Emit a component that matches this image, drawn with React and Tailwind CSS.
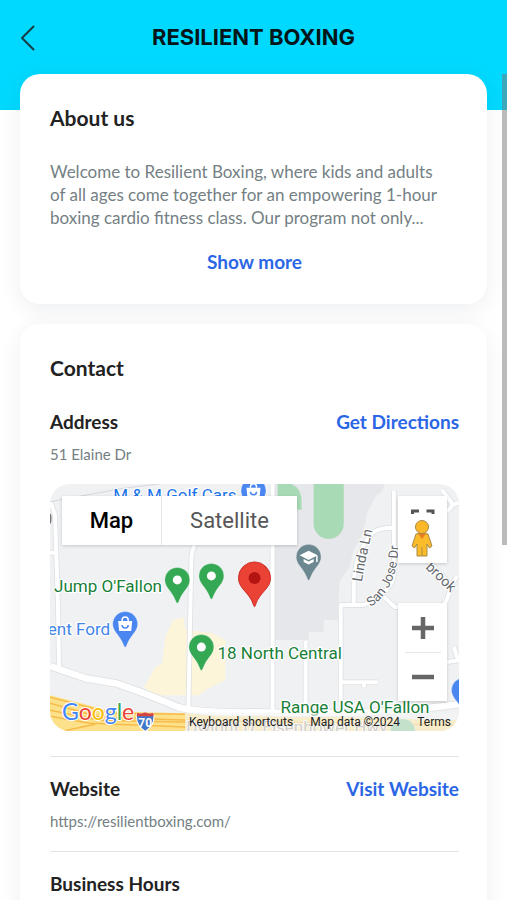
import { useState } from "react";

const ROADS = [
    "M0 17 L5 31 L8 124 L9 185",
    "M0 69 H6",
    "M147 55 Q141 66 141 76 L138 225",
    "M222 0 V228",
    "M255 157 V229",
    "M290 218 V121 L303 121 V96 Q306 66 321 50 Q326 44 343 44",
    "M343 7 V91 Q341 108 313 121 H303",
    "M333 113 L344 123 H386 Q396 121 397 112 L401 102 L377 77",
    "M400 102 L406 92",
    "M391 6 L402 21 L408 19 M402 21 L396 28",
    "M396 178 L408 176 M403 163 L407 176",
    "M290 198 H327 M313 198 V203",
]

const MAIN_ROAD = "M0 182 L35 194 L65 199 Q90 207 128 223 Q150 229 205 228 Q320 232 408 220"

function Pin({ x, y, color, children }){
    return (
        <g transform={`translate(${x} ${y})`}>
            <path d="M0 -12.5 A12.5 12.5 0 0 1 12.5 0 C12.5 7 6 11 3 18 L1 22.5 Q0 24 -1 22.5 L-3 18 C-6 11 -12.5 7 -12.5 0 A12.5 12.5 0 0 1 0 -12.5Z" fill={color} stroke="#fff" strokeOpacity="0.6" strokeWidth="0.6" />
            {children}
        </g>
    )
}

function BagGlyph(){
    return (
        <g>
            <path d="M-7 -3 H7 L6 7 H-6Z" fill="#fff" />
            <path d="M-3 -3 V-4 A3 3 0 0 1 3 -4 V-3" fill="none" stroke="#fff" strokeWidth="1.5" />
            <path d="M-3 1 A3 3 0 0 0 3 1" fill="none" stroke="#4a86f0" strokeWidth="1.5" />
        </g>
    )
}

function MapCanvas(){
    return (
        <svg viewBox="0 0 408 247" preserveAspectRatio="xMidYMid slice" className="block h-full w-full" fontFamily="Roboto, sans-serif">
            <rect width="408" height="247" fill="#eff1f3" />
            <path d="M223 0 H334 Q333 8 325 12 L316 30 Q314 52 303 66 L298 85 L289 97 L287 136 H273 V148 H258 V156 H223Z" fill="#e6e7eb" />
            <path d="M227 0 H240 Q251 4 251 18 V26 H227Z" fill="#a8dab5" />
            <path d="M263 0 H293 V40 A15 15 0 0 1 263 40Z" fill="#a8dab5" />
            <path d="M123 136 L133 133 L135 146 L162 149 L175 156 V196 L158 204 L148 211 H102 L94 203 L105 183 L112 179 L115 153Z" fill="#fdf5da" />

            {/* highway */}
            <path d="M0 211 L62 227 L135 229 L408 236 V247 H0Z" fill="#fde08a" />
            <g fill="none" stroke="#f6bc4b" strokeWidth="1.5">
                <path d="M0 213 L62 229 L135 230" />
                <path d="M0 219 L50 233 L140 236 L408 241" />
                <path d="M0 226 L50 236 L140 238" />
                <path d="M0 232 L40 239 L140 243" />
                <path d="M12 247 L45 240" />
            </g>

            <g fill="none" stroke="#dcdfe2" strokeWidth="5.5" strokeLinejoin="round">
                {ROADS.map((d) => <path key={d} d={d} />)}
                <path d={MAIN_ROAD} strokeWidth="8" />
            </g>
            <g fill="none" stroke="#fff" strokeWidth="4" strokeLinejoin="round">
                {ROADS.map((d) => <path key={d} d={d} />)}
                <path d={MAIN_ROAD} strokeWidth="6.5" />
            </g>
            <path d="M0 18 L70 5 L110 0" fill="none" stroke="#d5d7da" strokeWidth="1" />
            <ellipse cx="0" cy="35" rx="1.5" ry="5" fill="#777" />

            <g fill="#64686d" fontSize="14" stroke="#fff" strokeWidth="2" paintOrder="stroke">
                <path id="linda" d="M311 98 Q315 74 325 32" fill="none" stroke="none" />
                <path id="sanjose" d="M320 123 Q343 108 347 72 L350 35" fill="none" stroke="none" />
                <text><textPath href="#linda">Linda Ln</textPath></text>
                <text fontSize="13"><textPath href="#sanjose">San Jose Dr</textPath></text>
                <text transform="translate(374 84) rotate(44)">brook</text>
                <text x="136" y="249" fontSize="17" fill="#9c9484">Dwight D. Eisenhower Hwy</text>
            </g>

            <g fontSize="17" stroke="#fff" strokeWidth="2.5" strokeLinejoin="round" paintOrder="stroke">
                <text x="63" y="17" fill="#1a73e8">M &amp; M Golf Cars</text>
                <text x="60" y="151" textAnchor="end" fill="#4285e8">ent Ford</text>
                <text x="4" y="108" fill="#188038">Jump O'Fallon</text>
                <text x="167" y="175" fill="#188038">18 North Central</text>
                <text x="230" y="229" fill="#188038">Range USA O'Fallon</text>
            </g>

            <Pin x={203} y={7} color="#4a86f0"><BagGlyph /></Pin>
            <Pin x={75} y={140} color="#4a86f0"><BagGlyph /></Pin>
            <Pin x={413} y={206} color="#4a86f0" />
            <Pin x={127} y={96} color="#34a853"><circle r="4.5" fill="#fff" /></Pin>
            <Pin x={161} y={92} color="#34a853"><circle r="4.5" fill="#fff" /></Pin>
            <Pin x={151} y={163} color="#34a853"><circle r="4.5" fill="#fff" /></Pin>
            <Pin x={352} y={247} color="#7cc48d" />
            <Pin x={258} y={73} color="#6b8790">
                <path d="M0 -6 L9 -1.5 L0 3 L-9 -1.5Z" fill="#fff" />
                <path d="M-5 2 L0 4.5 L5 2 V5 L0 7.5 L-5 5Z M7.5 -1 H9 V5 H7.5Z" fill="#fff" />
            </Pin>
            <path d="M204 78 A16 16 0 0 1 220 94 C220 105 209 108 205 121 Q204 124.500 203 121 C199 108 188 105 188 94 A16 16 0 0 1 204 78Z" fill="#ea4335" stroke="#c5221f" strokeWidth="0.8" />
            <circle cx="204" cy="94" r="6" fill="#b31412" />

            {/* interstate shield */}
            <path d="M87 229 Q94 231 95 228 Q96 231 103 229 Q106 240 95 247 Q84 240 87 229Z" fill="#3f78c9" stroke="#fff" strokeWidth="1" />
            <path d="M86.500 232 L87 228.500 Q92 230 95 228 Q98 230 103 228.500 L103.500 232Z" fill="#d6453d" />
            <text x="95" y="243" textAnchor="middle" fontSize="12" fontWeight="700" fill="#fff">70</text>
        </svg>
    )
}

function Pegman(){
    return (
        <svg viewBox="0 0 49 67" className="h-[67px] w-[49px]">
            <path d="M14.500 18 V15 H21 M28.500 15 H35 V18" fill="none" stroke="#555" strokeWidth="3" />
            <path d="M18 38 Q24 36 30 38 L34 50 L31.500 52 L29 48 V60 H19 V48 L16.500 52 L14 50Z" fill="#fbbc2c" stroke="#a98a45" strokeWidth="1" strokeLinejoin="round" />
            <path d="M24 51 V60" stroke="#a98a45" strokeWidth="1" />
            <path d="M20 37.500 L24 43 L28 37.500Z" fill="#ea7a1e" />
            <circle cx="24" cy="31" r="6.500" fill="#fbb829" stroke="#a98a45" strokeWidth="1" />
        </svg>
    )
}

function GoogleMark(){
    return (
        <svg viewBox="0 0 76 30" className="h-[30px] w-[76px]" fontFamily="Lato, sans-serif">
            <text x="2" y="19" fontSize="23" stroke="#fff" strokeWidth="2" paintOrder="stroke">
                <tspan fill="#4285f4">G</tspan>
                <tspan fill="#ea4335">o</tspan>
                <tspan fill="#fbbc04">o</tspan>
                <tspan fill="#4285f4">g</tspan>
                <tspan fill="#34a853">l</tspan>
                <tspan fill="#ea4335">e</tspan>
            </text>
        </svg>
    )
}

function ContactMap(){
    const [mapType, setMapType] = useState("map")

    return (
        <div className="relative mt-5 h-[247px] overflow-hidden rounded-[20px] font-[Roboto,sans-serif]">
            <MapCanvas />
            <div className="absolute left-3 top-3 flex h-[49px] bg-white text-[22px] shadow-[0_1px_3px_rgba(0,0,0,0.18)]">
                <button
                onClick={() => setMapType("map")}
                className={`w-[100px] border-r border-gray-200 ${mapType === "map" ? "font-medium text-black" : "text-[#565656]"}`}
                >Map
                </button>
                <button
                onClick={() => setMapType("satellite")}
                className={`w-[135px] ${mapType === "satellite" ? "font-medium text-black" : "text-[#565656]"}`}
                >Satellite
                </button>
            </div>
            <button aria-label="Street View" className="absolute right-3 top-3 bg-white shadow-[0_1px_3px_rgba(0,0,0,0.18)]">
                <Pegman />
            </button>
            <div className="absolute bottom-[30px] right-3 flex w-[49px] flex-col items-center bg-white shadow-[0_1px_3px_rgba(0,0,0,0.18)]">
                <button aria-label="Zoom in" className="flex h-[49px] w-full items-center justify-center">
                    <svg viewBox="0 0 22 22" className="h-[22px] w-[22px]"><path d="M0 11 H22 M11 0 V22" stroke="#666" strokeWidth="4.500" /></svg>
                </button>
                <div className="h-px w-9 bg-gray-200"></div>
                <button aria-label="Zoom out" className="flex h-12 w-full items-center justify-center">
                    <svg viewBox="0 0 22 22" className="h-[22px] w-[22px]"><path d="M0 11 H22" stroke="#666" strokeWidth="4.500" /></svg>
                </button>
            </div>
            <a href="#google" aria-label="Google" className="absolute bottom-0 left-2.5">
                <GoogleMark />
            </a>
            <div className="absolute bottom-0 right-0 flex h-[18px] w-[274px] items-center justify-between bg-[#f5f5f5]/60 pl-1 pr-2 text-xs text-[#222]">
                <button>Keyboard shortcuts</button>
                <span>Map data ©2024</span>
                <a href="#terms">Terms</a>
            </div>
        </div>
    )
}

function Card({ title, children }){
    return (
        <section className="rounded-[20px] bg-white py-[30px] pl-[30px] pr-7 shadow-[0_6px_22px_rgba(40,50,80,0.08)]">
            <h2 className="mb-7 text-[21px] font-bold leading-7 text-[#222]">{title}</h2>
            {children}
        </section>
    )
}

function Row({ label, link, href, value }){
    return (
        <div>
            <div className="flex items-center justify-between text-[19px] font-bold leading-6">
                <h3 className="text-[#222]">{label}</h3>
                {link && <a href={href} className="text-[#2a66e5]">{link}</a>}
            </div>
            {value && <p className="mt-2.5 text-[15px] leading-5 text-[#748084]">{value}</p>}
        </div>
    )
}

function App(){
    return (
        <div className="relative h-screen overflow-hidden bg-white font-[Lato,sans-serif]">
            <header className="h-[110px] bg-[#00d9ff] px-5">
                <div className="grid h-[75px] grid-cols-[24px_1fr_24px] items-center">
                    <button aria-label="Back">
                        <svg viewBox="0 0 16 26" className="h-[26px] w-4">
                            <path d="M13.500 1.500 L2 13 L13.500 24.500" fill="none" stroke="#163c45" strokeWidth="2" strokeLinecap="round" strokeLinejoin="round" />
                        </svg>
                    </button>
                    <h1 className="text-center font-[Inter,sans-serif] text-[22px] font-bold text-[#04161a]">RESILIENT BOXING</h1>
                </div>
            </header>
            <main className="-mt-9 flex flex-col gap-5 px-5">
                <Card title="About us">
                    <p className="text-[17px] leading-[23px] text-[#748084]">
                        Welcome to Resilient Boxing, where kids and adults<br />
                        of all ages come together for an empowering 1-hour<br />
                        boxing cardio fitness class. Our program not only...
                    </p>
                    <button className="mx-auto mt-[21px] block text-[19px] font-bold leading-6 text-[#2a66e5]">Show more</button>
                </Card>
                <Card title="Contact">
                    <Row label="Address" link="Get Directions" href="#directions" value="51 Elaine Dr" />
                    <ContactMap />
                    <div className="mt-[25px] border-y border-[#e2e4e5] py-5">
                        <Row label="Website" link="Visit Website" href="https://resilientboxing.com/" value="https://resilientboxing.com/" />
                    </div>
                    <div className="pt-5">
                        <Row label="Business Hours" />
                    </div>
                </Card>
            </main>
            <div className="absolute right-0 top-[74px] h-[471px] w-[5px] bg-[#777]/50"></div>
        </div>
    )
}

export default App
